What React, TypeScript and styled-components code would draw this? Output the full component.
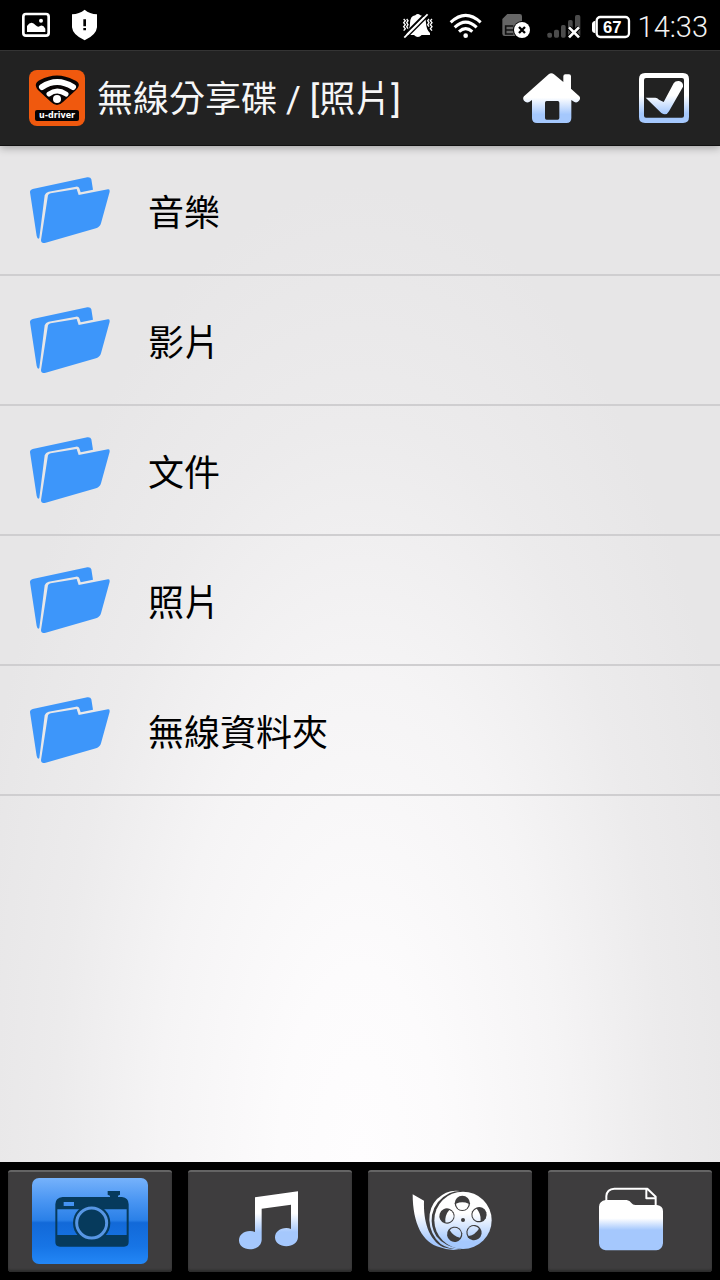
import React from "react";
import styled, { createGlobalStyle } from "styled-components";

const GlobalStyle = createGlobalStyle`
  *, *::before, *::after { box-sizing: border-box; }
  body {
    margin: 0;
    background: #000;
    font-family: Roboto, "Noto Sans CJK TC", sans-serif;
  }
`;

const Screen = styled.div`
  display: flex;
  flex-direction: column;
  min-height: 100vh;
`;

const StatusBar = styled.div`
  display: flex;
  align-items: center;
  justify-content: space-between;
  height: 50px;
  padding: 0 12px;
  background: #000;
  color: #f4f4f4;
`;

const StatusGroup = styled.div`
  display: flex;
  align-items: center;
`;

const StatusIcon = styled.svg`
  display: block;
  width: 48px;
  height: 50px;
`;

const Clock = styled.time`
  padding-left: 4px;
  padding-top: 4px;
  font-size: 29px;
  font-weight: 300;
  line-height: 32px;
`;

const Header = styled.header`
  position: relative;
  display: flex;
  align-items: center;
  height: 96px;
  padding-left: 29px;
  background: #222;
  border-top: 1px solid #343434;
  border-bottom: 1px solid #111;
  box-shadow: 0 2px 8px rgba(0, 0, 0, 0.3);
`;

const Logo = styled.svg`
  display: block;
  flex: none;
  width: 56px;
  height: 56px;
`;

const Title = styled.h1`
  flex: 1;
  margin: 0 0 0 12px;
  padding-top: 4px;
  color: #f6f6f6;
  font-size: 36px;
  font-weight: 400;
  line-height: 48px;
  white-space: nowrap;
`;

const Action = styled.button`
  display: flex;
  align-items: center;
  justify-content: center;
  width: 112px;
  height: 94px;
  padding: 0;
  border: 0;
  background: none;
  cursor: pointer;
`;

const ActionIcon = styled.svg`
  display: block;
  height: 50px;
`;

const Content = styled.main`
  flex: 1;
  background: radial-gradient(ellipse 56% 96% at 50% 100%, #fefdfe 0, #fcfbfc 20%, #f5f4f5 50%, #ecebec 76%, #e7e6e7 100%);
`;

const FolderList = styled.ul`
  margin: 0;
  padding: 0;
  list-style: none;
`;

const FolderRow = styled.li`
  height: 130px;
  border-bottom: 2px solid #cfced0;
`;

const FolderLink = styled.a`
  display: flex;
  align-items: center;
  gap: 38px;
  height: 100%;
  padding: 0 30px;
  color: #000;
  font-size: 36px;
  line-height: 48px;
  text-decoration: none;
`;

const FolderName = styled.span`
  padding-top: 8px;
`;

const FolderImage = styled.svg`
  display: block;
  flex: none;
  width: 80px;
  height: 67px;
`;

const TabBar = styled.nav`
  display: grid;
  grid-template-columns: repeat(4, 1fr);
  gap: 16px;
  padding: 8px;
  background: #000;
`;

const Tab = styled.button`
  display: flex;
  align-items: center;
  justify-content: center;
  height: 102px;
  padding: 0 0 2px;
  border: 0;
  border-top: 2px solid #646464;
  border-radius: 3px;
  background: #3e3d3e;
  box-shadow: inset 0 -2px 2px #2c2c2c;
  cursor: pointer;
`;

const TabIcon = styled.svg<{ $active?: boolean }>`
  display: block;
  width: 116px;
  height: 86px;
  border-radius: 7px;
  background: ${(p) =>
    p.$active
      ? "linear-gradient(#76b2fb 0, #4c97f3 25%, #2a80e8 49%, #1269d8 52%, #1775e6 80%, #2387f6 100%)"
      : "none"};
`;

const Gradient = ({ id, top, bottom }: { id: string; top: number; bottom: number }) => (
  <linearGradient id={id} gradientUnits="userSpaceOnUse" x1="0" x2="0" y1={top} y2={bottom}>
    <stop offset="0" stopColor="#fff" />
    <stop offset="1" stopColor="#a5c8fd" />
  </linearGradient>
);

const AppLogo = () => (
  <Logo viewBox="0 0 56 56" aria-hidden="true">
    <rect width="56" height="56" rx="8" fill="#f0590e" />
    <path d="M9 20C5 15 7 12 11 10Q28 1 45 10C50 12 52 15 47 20L34 32Q28 38 22 32Z" fill="#080404" />
    <g fill="none" stroke="#fff" strokeLinecap="round">
      <path d="M13 17Q28 7 44 17" strokeWidth="6" />
      <path d="M20 24Q28 18 37 24" strokeWidth="5" />
    </g>
    <circle cx="28" cy="29" r="4" fill="#fff" />
    <rect x="6" y="40" width="44" height="11" rx="2" fill="#080404" />
    <text x="28" y="48" fill="#fff" fontFamily="DejaVu Sans, sans-serif" fontSize="8" fontWeight="700" textAnchor="middle">
      u-driver
    </text>
  </Logo>
);

const FolderIcon = () => (
  <FolderImage viewBox="90 79 240 201" aria-hidden="true" fill="#3d96fa">
    <path d="M90 125Q89 118 98 115L262 80Q272 79 274 86L279 117L242 125L238 113Q236 107 228 108L146 123Q137 125 134 134L118 262Q113 268 110 256Z" />
    <path d="M144 134Q146 129 152 128L230 115L236 133L324 116Q330 115 329 123L303 218Q300 229 288 233L137 276Q123 280 123 268Z" />
  </FolderImage>
);

const reelHoles = [
  { x: 307, y: 160, turn: 0 },
  { x: 357, y: 194, turn: 72 },
  { x: 342, y: 248, turn: 144 },
  { x: 284, y: 253, turn: 216 },
  { x: 261, y: 198, turn: 288 },
];

const folders = ["音樂", "影片", "文件", "照片", "無線資料夾"];

export default function App() {
  return (
    <>
      <GlobalStyle />
      <Screen>
        <StatusBar>
          <StatusGroup>
            <StatusIcon viewBox="36 0 144 150" aria-hidden="true">
              <rect x="70" y="42" width="76" height="65" rx="8" fill="none" stroke="#fff" strokeWidth="8" />
              <path d="M81 96V78Q94 60 107 76Q114 83 120 78Q129 73 136 86V96Z" fill="#fff" />
              <circle cx="123" cy="62" r="6" fill="#fff" />
            </StatusIcon>
            <StatusIcon viewBox="180 0 144 150" aria-hidden="true">
              <path d="M254 29Q269 42 291 43V82Q289 105 254 121Q218 105 216 82V43Q238 42 254 29Z" fill="#fff" />
              <path d="M250 58H258V79H250ZM250 84H258V91H250Z" fill="#000" />
            </StatusIcon>
          </StatusGroup>
          <StatusGroup>
            <StatusIcon viewBox="12 0 144 150" aria-hidden="true">
              <path d="M49 98Q60 88 60 70Q60 48 76 46Q83 38 91 46Q107 49 108 68Q109 89 120 99V105H95Q84 117 72 105H49Z" fill="#fff" />
              <path d="M40 107L108 39" stroke="#000" strokeWidth="6" />
              <path d="M43 113L113 43" stroke="#fff" strokeWidth="6" />
              <path d="M47 116L117 46" stroke="#000" strokeWidth="4" />
              <path d="M41 57l5 5l-5 6l5 6l-5 6l5 6l-5 6M50 57l4 5l-4 6l4 6l-4 6l4 6M126 57l-5 5l5 6l-5 6l5 6l-5 6l5 6M117 57l-4 5l4 6l-4 6l4 6" fill="none" stroke="#fff" strokeWidth="4" />
            </StatusIcon>
            <StatusIcon viewBox="156 0 144 150" aria-hidden="true">
              <g fill="none" stroke="#fff" strokeWidth="9">
                <path d="M182 67Q227 25 272 67" />
                <path d="M194 82Q227 51 260 82" />
                <path d="M207 95Q227 77 247 95" />
              </g>
              <circle cx="227" cy="107" r="7" fill="#fff" />
            </StatusIcon>
            <StatusIcon viewBox="300 0 144 150" aria-hidden="true">
              <path d="M337 57L352 42H389Q396 42 396 49V108H344Q337 108 337 101Z" fill="#666" />
              <path d="M370 78H347V102H370M347 90H370" fill="none" stroke="#111" strokeWidth="5" />
              <circle cx="396" cy="90" r="27" fill="#000" />
              <circle cx="396" cy="90" r="24" fill="#fff" />
              <path d="M387 81L405 99M405 81L387 99" stroke="#000" strokeWidth="7" />
            </StatusIcon>
            <StatusIcon viewBox="444 0 144 150" aria-hidden="true">
              <g fill="#4b4b4b">
                <rect x="472" y="98" width="14" height="15" rx="5" />
                <rect x="492" y="89" width="15" height="24" rx="5" />
                <rect x="513" y="75" width="14" height="38" rx="5" />
                <rect x="534" y="60" width="14" height="53" rx="5" />
                <rect x="555" y="45" width="16" height="68" rx="5" />
              </g>
              <path d="M537 82L567 112M567 82L537 112" stroke="#000" strokeWidth="14" />
              <path d="M537 82L567 112M567 82L537 112" stroke="#fff" strokeWidth="8" />
            </StatusIcon>
            <StatusIcon viewBox="588 0 144 150" role="img" aria-label="67%">
              <rect x="620" y="51" width="97" height="60" rx="11" fill="none" stroke="#fff" strokeWidth="7" />
              <path d="M616 62Q606 64 606 72V90Q606 98 616 100Z" fill="#fff" />
              <text x="667" y="99" fill="#fff" fontFamily="Liberation Sans, sans-serif" fontWeight="700" fontSize="50" textAnchor="middle">67</text>
            </StatusIcon>
            <Clock>14:33</Clock>
          </StatusGroup>
        </StatusBar>

        <Header>
          <AppLogo />
          <Title>無線分享碟 / [照片]</Title>
          <Action type="button" aria-label="Home">
            <ActionIcon viewBox="68 68 172 150">
              <defs><Gradient id="home" top={142} bottom={192} /></defs>
              <path
                d="M145 72Q153 65 161 72L189 95V78Q189 72 195 72H206Q212 72 212 78V115L237 138Q242 144 236 151Q229 160 221 154L213 149V203Q213 218 198 218H110Q95 218 95 203V149L88 154Q79 160 71 151Q66 143 71 138ZM139 152Q134 152 134 157V203Q134 208 139 208H172Q177 208 177 203V157Q177 152 172 152Z"
                fill="url(#home)"
                fillRule="evenodd"
              />
            </ActionIcon>
          </Action>
          <Action type="button" aria-label="Select">
            <ActionIcon viewBox="417 68 150 150">
              <defs><Gradient id="select" top={135} bottom={190} /></defs>
              <path d="M435 68H549Q567 68 567 86V200Q567 218 549 218H435Q417 218 417 200V86Q417 68 435 68ZM438 83Q432 83 432 89V196Q432 202 438 202H546Q552 202 552 196V89Q552 83 546 83Z" fill="url(#select)" fillRule="evenodd" />
              <path d="M437 142H466Q472 142 477 148L491 155L521 99Q526 91 537 92Q551 96 549 109L507 183Q499 198 484 188Z" fill="url(#select)" />
            </ActionIcon>
          </Action>
        </Header>

        <Content>
          <FolderList>
            {folders.map((name) => (
              <FolderRow key={name}>
                <FolderLink href="#">
                  <FolderIcon />
                  <FolderName>{name}</FolderName>
                </FolderLink>
              </FolderRow>
            ))}
          </FolderList>
        </Content>

        <TabBar>
          <Tab type="button" aria-label="照片" aria-current="page">
            <TabIcon $active viewBox="96 84 348 258">
              <path d="M323 123H360V134L354 137V141H366Q386 143 386 163V276Q386 290 372 290H180Q166 290 166 276V163Q166 143 188 141H330V137L323 134ZM191 156V168H222V156ZM172 178V255H380V178Z" fill="#063a5c" fillRule="evenodd" />
              <circle cx="275" cy="219" r="56" fill="#063a5c" />
              <circle cx="275" cy="219" r="45" fill="none" stroke="#5796e4" strokeWidth="9" />
            </TabIcon>
          </Tab>
          <Tab type="button" aria-label="音樂">
            <TabIcon viewBox="96 84 348 258">
              <defs><Gradient id="music" top={190} bottom={246} /></defs>
              <path d="M225 142L354 124V262C353 278 338 289 319 289C300 289 285 278 285 262C285 246 300 234 319 234Q327 234 333 237V164L245 176V270C244 287 229 298 210 298C191 298 177 287 177 271C177 255 191 243 210 243Q219 243 225 246Z" fill="url(#music)" />
            </TabIcon>
          </Tab>
          <Tab type="button" aria-label="影片">
            <TabIcon viewBox="96 84 348 258">
              <defs>
                <Gradient id="film" top={190} bottom={275} />
                <mask id="reel" maskUnits="userSpaceOnUse" x="140" y="110" width="270" height="200">
                  <rect x="140" y="110" width="270" height="200" fill="#fff" />
                  {reelHoles.map(({ x, y, turn }) => (
                    <g key={turn} transform={`translate(${x} ${y}) rotate(${turn})`}>
                      <circle r="23" fill="#000" />
                      <path d="M-19 1Q0 -7 19 1A19 19 0 0 1 -19 1Z" fill="#fff" />
                    </g>
                  ))}
                  <circle cx="309" cy="210" r="6" fill="#000" />
                </mask>
              </defs>
              <path d="M158 133L192 152C190 213 205 268 250 292Q272 299 302 298Q270 304 240 292C188 280 158 220 158 133Z" fill="url(#film)" />
              <path d="M300 123Q262 117 231 147Q207 171 208 211Q210 254 242 282Q267 299 304 298Q253 290 229 259Q211 231 216 195Q225 151 268 130Q284 123 300 123Z" fill="url(#film)" />
              <circle cx="309" cy="211" r="86" fill="url(#film)" mask="url(#reel)" />
            </TabIcon>
          </Tab>
          <Tab type="button" aria-label="文件">
            <TabIcon viewBox="111 84 348 258">
              <defs><Gradient id="files" top={205} bottom={240} /></defs>
              <path d="M214 160V138Q216 117 238 116H337L362 140V172M334 117V145H362" fill="none" stroke="#fff" strokeWidth="6" strokeLinejoin="round" />
              <path d="M192 170Q193 153 212 150H275Q284 151 290 160Q293 165 301 165H366Q384 167 384 184V280Q382 300 364 301H212Q193 299 192 280Z" fill="url(#files)" />
            </TabIcon>
          </Tab>
        </TabBar>
      </Screen>
    </>
  );
}
